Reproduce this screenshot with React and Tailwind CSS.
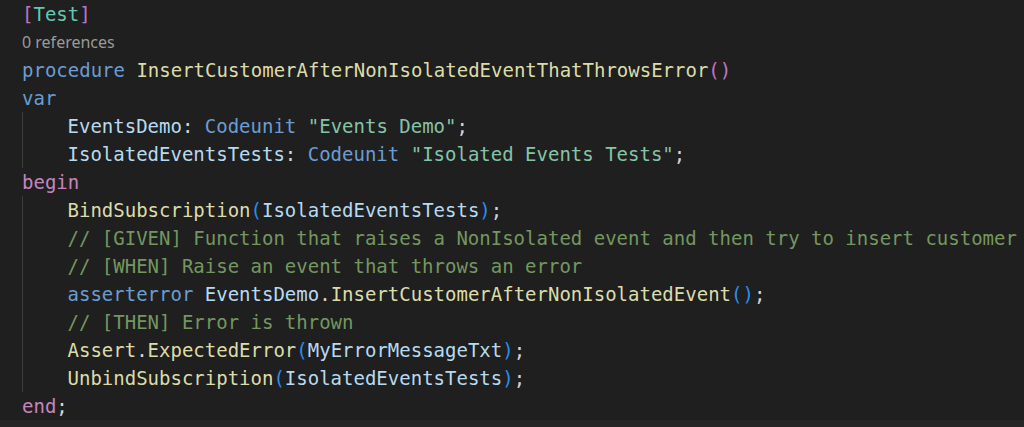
import React from "react";

// token colours, roughly VS Code Dark Modern as it looks in the shot
const C = {
  kw: "text-[#6a9dd3]",
  ctrl: "text-[#c586c0]",
  fn: "text-[#dcdcaa]",
  vr: "text-[#b7daf0]",
  str: "text-[#84c4a8]",
  ty: "text-[#62c9b0]",
  cm: "text-[#74975f]",
  br1: "text-[#c274c6]",
  br2: "text-[#2b8ee8]",
  pl: "text-[#d4d4d4]",
};

const T = ({ c, children }) => <span className={c}>{children}</span>;

const Line = ({ indent = false, children }) => (
  <div className="h-[28px] flex items-center whitespace-pre">
    {indent && <span className="w-[45.5px] h-full border-l border-[#3d3d3d] shrink-0" />}
    <span>{children}</span>
  </div>
);

const App = () => {
  return (
    <div className="w-[1024px] h-[427px] bg-[#1f1f1f] flex flex-col overflow-hidden">
      <div
        className="flex-1 pl-[22px] text-[19px] leading-[28px]"
        style={{ fontFamily: '"DejaVu Sans Mono", "Liberation Mono", monospace' }}
      >
        <Line>
          <T c={C.br1}>[</T>
          <T c={C.ty}>Test</T>
          <T c={C.br1}>]</T>
        </Line>
        <div
          className="h-[28px] flex items-center text-[16px] text-[#9a9a9a]"
          style={{ fontFamily: '"Noto Sans", "Open Sans", sans-serif' }}
        >
          0 references
        </div>
        <Line>
          <T c={C.kw}>procedure</T> <T c={C.fn}>InsertCustomerAfterNonIsolatedEventThatThrowsError</T>
          <T c={C.br1}>()</T>
        </Line>
        <Line>
          <T c={C.kw}>var</T>
        </Line>
        <Line indent>
          <T c={C.vr}>EventsDemo</T>
          <T c={C.pl}>: </T>
          <T c={C.kw}>Codeunit</T> <T c={C.str}>"Events Demo"</T>
          <T c={C.pl}>;</T>
        </Line>
        <Line indent>
          <T c={C.vr}>IsolatedEventsTests</T>
          <T c={C.pl}>: </T>
          <T c={C.kw}>Codeunit</T> <T c={C.str}>"Isolated Events Tests"</T>
          <T c={C.pl}>;</T>
        </Line>
        <Line>
          <T c={C.ctrl}>begin</T>
        </Line>
        <Line indent>
          <T c={C.fn}>BindSubscription</T>
          <T c={C.br2}>(</T>
          <T c={C.vr}>IsolatedEventsTests</T>
          <T c={C.br2}>)</T>
          <T c={C.pl}>;</T>
        </Line>
        <Line indent>
          <T c={C.cm}>// [GIVEN] Function that raises a NonIsolated event and then try to insert customer</T>
        </Line>
        <Line indent>
          <T c={C.cm}>// [WHEN] Raise an event that throws an error</T>
        </Line>
        <Line indent>
          <T c={C.kw}>asserterror</T> <T c={C.vr}>EventsDemo</T>
          <T c={C.pl}>.</T>
          <T c={C.fn}>InsertCustomerAfterNonIsolatedEvent</T>
          <T c={C.br2}>()</T>
          <T c={C.pl}>;</T>
        </Line>
        <Line indent>
          <T c={C.cm}>// [THEN] Error is thrown</T>
        </Line>
        <Line indent>
          <T c={C.fn}>Assert</T>
          <T c={C.pl}>.</T>
          <T c={C.fn}>ExpectedError</T>
          <T c={C.br2}>(</T>
          <T c={C.vr}>MyErrorMessageTxt</T>
          <T c={C.br2}>)</T>
          <T c={C.pl}>;</T>
        </Line>
        <Line indent>
          <T c={C.fn}>UnbindSubscription</T>
          <T c={C.br2}>(</T>
          <T c={C.vr}>IsolatedEventsTests</T>
          <T c={C.br2}>)</T>
          <T c={C.pl}>;</T>
        </Line>
        <Line>
          <T c={C.ctrl}>end</T>
          <T c={C.pl}>;</T>
        </Line>
      </div>
      <div className="h-[7px] bg-[#262626] shrink-0" />
    </div>
  );
};

export default App;
